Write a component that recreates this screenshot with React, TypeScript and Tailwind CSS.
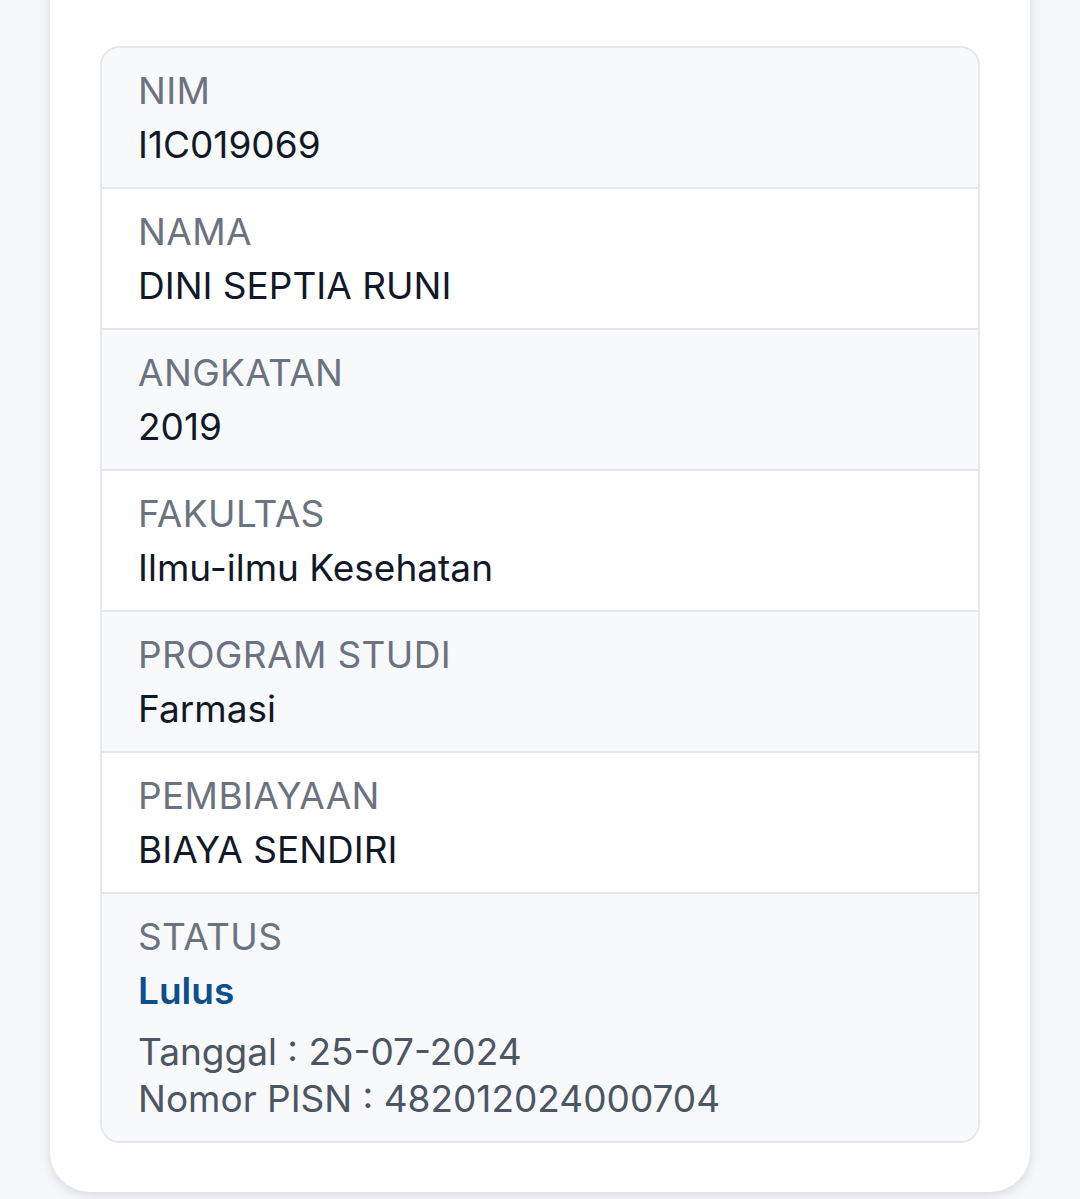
import React from 'react';

const rows: { label: string; value: string }[] = [
  { label: 'NIM', value: 'I1C019069' },
  { label: 'NAMA', value: 'DINI SEPTIA RUNI' },
  { label: 'ANGKATAN', value: '2019' },
  { label: 'FAKULTAS', value: 'Ilmu-ilmu Kesehatan' },
  { label: 'PROGRAM STUDI', value: 'Farmasi' },
  { label: 'PEMBIAYAAN', value: 'BIAYA SENDIRI' },
];

const App: React.FC = () => {
  return (
    <div className="min-h-[1199px] bg-[#f6f7f9] overflow-hidden" style={{ fontFamily: 'Inter, "Noto Sans", sans-serif' }}>
      <div className="mx-[50px] -mt-[50px] rounded-[40px] bg-white px-[50px] pt-[96px] pb-[49px] shadow-[0_3px_12px_rgba(0,0,0,0.12)]">
        <div className="rounded-[20px] border-2 border-[#e5e7eb] overflow-hidden">
          {rows.map((r, i) => (
            <div
              key={r.label}
              className={`px-[36px] pt-[16px] pb-[15px] border-b-2 border-[#e5e7eb] ${i % 2 === 0 ? 'bg-[#f8f9fb]' : 'bg-white'}`}
            >
              <p className="text-[37px] leading-[54px] tracking-[0.01em] text-[#6b7280]">{r.label}</p>
              <p className="text-[37px] leading-[54px] text-[#111827]">{r.value}</p>
            </div>
          ))}
          <div className="px-[36px] pt-[16px] pb-[19px] bg-[#f8f9fb]">
            <p className="text-[37px] leading-[54px] tracking-[0.01em] text-[#6b7280]">STATUS</p>
            <p className="text-[37px] leading-[54px] font-semibold text-[#0b4f8c]">Lulus</p>
            <div className="mt-[10px] text-[37px] leading-[47px] text-[#4b5563]">
              <p>Tanggal : 25-07-2024</p>
              <p>Nomor PISN : 482012024000704</p>
            </div>
          </div>
        </div>
      </div>
    </div>
  );
};

export default App;
